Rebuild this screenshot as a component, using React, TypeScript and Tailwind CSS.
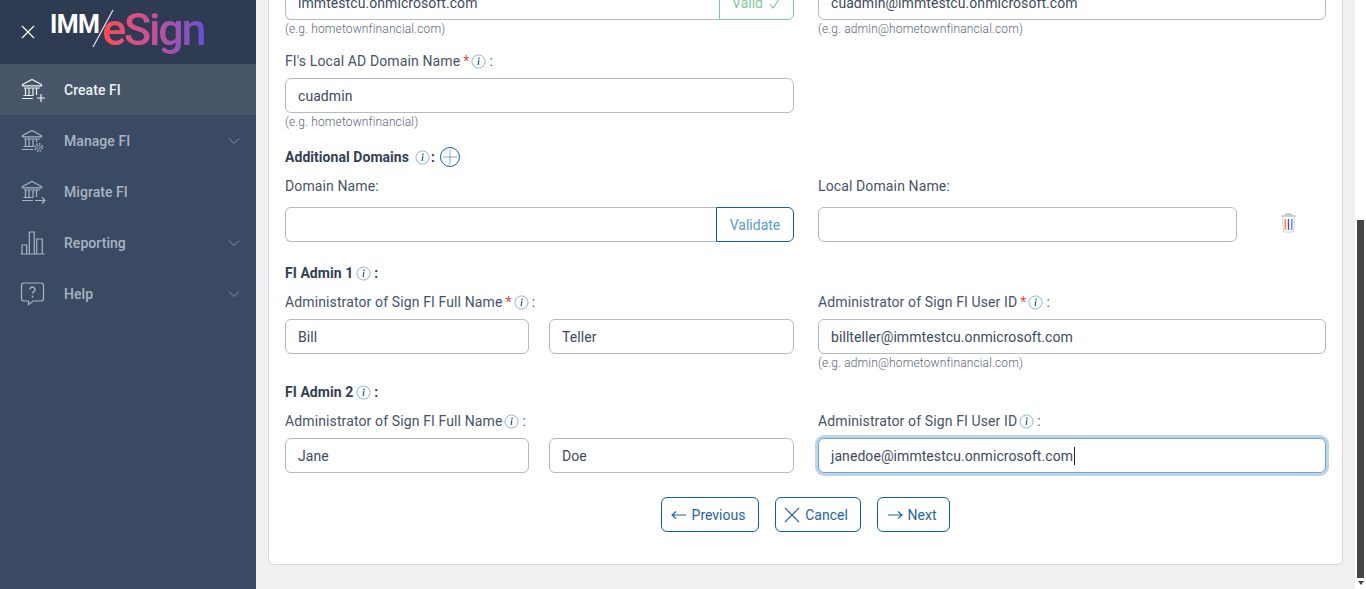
import React from "react";

const Info = ({ className = "" }: { className?: string }) => (
  <svg viewBox="0 0 16 16" className={"inline-block w-[15px] h-[15px] shrink-0 " + className} fill="none">
    <circle cx="8" cy="8" r="7" stroke="#7fa6c9" strokeWidth="0.9" />
    <path d="M8.300 6.900 7.700 11.300" stroke="#1f5f9a" strokeWidth="1.300" strokeLinecap="round" />
    <circle cx="8.600" cy="4.700" r="0.850" fill="#1f5f9a" />
  </svg>
);

const Chevron = () => (
  <svg viewBox="0 0 12 8" className="w-[12px] h-[8px]" fill="none" stroke="#8c98aa" strokeWidth="0.9">
    <path d="M1 1.500 6 6.500 11 1.500" />
  </svg>
);

const Bank = ({ children }: { children?: React.ReactNode }) => (
  <svg viewBox="0 0 26 26" className="w-[26px] h-[26px]" fill="none" stroke="currentColor" strokeWidth="1.200">
    <path d="M2.500 7.500 12 2.500l9.500 5v1.300h-19z" />
    <path d="M4 11h16M5.500 11v7M9 11v7M13 11v7M16.500 11v3M3.500 18.500h10M2 21.500h11" />
    {children}
  </svg>
);

const Field = ({ value, className = "", focused = false }: { value?: string; className?: string; focused?: boolean }) => (
  <div
    className={
      "h-[35px] px-[12px] pt-px flex items-center rounded-[6px] bg-white text-[14px] text-[#3d4a5c] tracking-[0.07px] border " +
      (focused ? "border-[#6ea3d4] ring-[3px] ring-[#bdd5ea] " : "border-[#b4bac6] ") +
      className
    }
  >
    <span className="whitespace-nowrap">{value}</span>
    {focused && <span className="w-px h-[18px] bg-[#222] ml-px" />}
  </div>
);

const Hint = ({ children }: { children: React.ReactNode }) => (
  <div className="h-[18px] leading-[18px] text-[12px] font-light tracking-[0.14px] text-[#5a6678]">{children}</div>
);

const Label = ({ children, className = "" }: { children: React.ReactNode; className?: string }) => (
  <div className={"h-[20px] leading-[20px] text-[14px] tracking-[0.12px] text-[#46536a] flex items-center " + className}>{children}</div>
);

const Req = () => <span className="text-[#e5484d] ml-[3px] mr-[1px]">*</span>;

const Section = ({ children, className = "" }: { children: React.ReactNode; className?: string }) => (
  <div className={"h-[20px] text-[14px] font-bold tracking-[0.05px] text-[#333f52] flex items-center " + className}>{children}</div>
);

const Btn = ({ icon, label, className = "" }: { icon: React.ReactNode; label: string; className?: string }) => (
  <div className={"h-[35px] pr-[4px] flex items-center justify-center gap-[5px] rounded-[6px] border border-[#0f5f9f] text-[14px] text-[#1f639f] " + className}>
    {icon}
    <span className="pt-[2px]">{label}</span>
  </div>
);

const NavItem = ({ icon, label, chevron, active }: { icon: React.ReactNode; label: string; chevron?: boolean; active?: boolean }) => (
  <div className={"h-[51px] flex items-center pl-[20px] pr-[16px] " + (active ? "bg-[#475569] text-[#eef1f5]" : "text-[#a9b3c1]")}>
    <span className="w-[44px] flex items-center">{icon}</span>
    <span className="flex-1 pt-[2px] text-[14px] font-medium tracking-[0.05px]">{label}</span>
    {chevron && <Chevron />}
  </div>
);

export default function App() {
  return (
    <div className="w-[1366px] h-[589px] overflow-hidden flex bg-[#f0f0f0]" style={{ fontFamily: "Roboto, sans-serif" }}>
      <aside className="w-[256px] shrink-0 bg-[#3b4a63] flex flex-col">
        <div className="h-[64px] bg-[#2f3b52] flex items-center pl-[21px] relative">
          <svg viewBox="0 0 14 14" className="w-[14px] h-[14px]" stroke="#fff" strokeWidth="1.200" fill="none">
            <path d="M1 1l12 12M13 1 1 13" />
          </svg>
          <div className="ml-[15px] h-[64px] flex items-start relative">
            <span className="mt-[9px] text-[25px] leading-[32px] font-bold text-white tracking-[-0.6px]">IMM</span>
            <svg viewBox="0 0 24 40" className="absolute left-[41px] top-[9px] w-[24px] h-[40px]" stroke="#e5e7eb" strokeWidth="1.200" fill="none">
              <path d="M22 1 2 38" />
            </svg>
            <span className="ml-[3px] mt-[4px] text-[45px] leading-[52px] font-medium tracking-[-2.300px] bg-gradient-to-r from-[#ff4b4f] via-[#c4509a] to-[#6a4fd0] bg-clip-text text-transparent">
              eSign
            </span>
          </div>
        </div>
        <NavItem
          active
          label="Create FI"
          icon={
            <Bank>
              <path d="M16.500 14v4M21 17v8M17 21h8" stroke="#eef1f5" />
            </Bank>
          }
        />
        <NavItem
          chevron
          label="Manage FI"
          icon={
            <Bank>
              <circle cx="18.500" cy="19.500" r="1.700" strokeWidth="1" />
              <circle cx="18.500" cy="19.500" r="3.700" strokeWidth="1.500" strokeDasharray="1.600 1.300" />
            </Bank>
          }
        />
        <NavItem
          label="Migrate FI"
          icon={
            <Bank>
              <path d="M16.500 14v4M15 21.500h10M22 18.500l3 3-3 3" />
            </Bank>
          }
        />
        <NavItem
          chevron
          label="Reporting"
          icon={
            <svg viewBox="0 0 26 26" className="w-[26px] h-[26px]" fill="none" stroke="currentColor" strokeWidth="1.200">
              <path d="M0.500 24h24M2 24V15h4.700v9M9.300 24V2h5v22M16.700 24V9h5.600v15" />
            </svg>
          }
        />
        <NavItem
          chevron
          label="Help"
          icon={
            <svg viewBox="0 0 26 26" className="w-[26px] h-[26px]" fill="none" stroke="currentColor" strokeWidth="1.200">
              <path d="M4 2h17a2.500 2.500 0 0 1 2.500 2.500v13a2.500 2.500 0 0 1-2.500 2.500H13l-4.500 3.500V20H4a2.500 2.500 0 0 1-2.500-2.500v-13A2.500 2.500 0 0 1 4 2z" />
              <path d="M10 8.500a2.500 2.500 0 1 1 3.800 2.100c-.9.6-1.300 1.100-1.300 2" strokeWidth="1.400" />
              <circle cx="12.500" cy="15.500" r="0.900" fill="currentColor" stroke="none" />
            </svg>
          }
        />
      </aside>

      <main className="flex-1 overflow-hidden pl-[12px] pr-[12px]">
        <div className="-mt-[39px] w-[1075px] h-[604px] bg-white border border-[#d4d6dc] rounded-[6px] pl-[16px] pr-[16px] pt-[23px] text-[#46536a]">
          <div className="grid grid-cols-[509px_508px] gap-x-[24px]">
            <div>
              <div className="flex">
                <Field value="immtestcu.onmicrosoft.com" className="flex-1 rounded-r-none border-r-0" />
                <div className="w-[75px] h-[35px] pt-px border border-[#7fcb97] rounded-r-[6px] flex items-center justify-center gap-[5px] text-[14px] text-[#7fcb97]">
                  Valid
                  <svg viewBox="0 0 14 14" className="w-[13px] h-[13px]" fill="none" stroke="#7fcb97" strokeWidth="1.200">
                    <path d="M2 8l3.500 4L12.500 1.500" />
                  </svg>
                </div>
              </div>
              <Hint>(e.g. hometownfinancial.com)</Hint>
            </div>
            <div>
              <Field value="cuadmin@immtestcu.onmicrosoft.com" />
              <Hint>(e.g. admin@hometownfinancial.com)</Hint>
            </div>
          </div>

          <Label className="mt-[13px]">
            FI's Local AD Domain Name
            <Req />
            <Info className="ml-[1px]" />
            <span className="ml-[3px]">:</span>
          </Label>
          <div className="w-[509px] mt-[7px]">
            <Field value="cuadmin" />
            <Hint>(e.g. hometownfinancial)</Hint>
          </div>

          <Section className="mt-[16px]">
            Additional Domains
            <Info className="ml-[6px]" />
            <span className="ml-[1px]">:</span>
            <svg viewBox="0 0 20 20" className="w-[20px] h-[20px] ml-[5px]" fill="none">
              <circle cx="10" cy="10" r="9.500" stroke="#0f5f9f" strokeWidth="1" />
              <path d="M10 3v14M3 10h14" stroke="#6a93b8" strokeWidth="0.8" />
            </svg>
          </Section>

          <div className="grid grid-cols-[509px_508px] gap-x-[24px] mt-[9px]">
            <Label>Domain Name:</Label>
            <Label>Local Domain Name:</Label>
          </div>
          <div className="grid grid-cols-[509px_508px] gap-x-[24px] mt-[11px]">
            <div className="flex">
              <Field className="flex-1 rounded-r-none border-r-0" />
              <div className="w-[78px] h-[35px] pt-px border border-[#0f5f9f] rounded-r-[6px] flex items-center justify-center text-[14px] text-[#5b9bd0]">
                Validate
              </div>
            </div>
            <div className="flex items-center">
              <Field className="w-[419px]" />
              <svg viewBox="0 0 16 20" className="w-[17px] h-[20px] ml-[43px] -mt-[3px]" fill="none">
                <path d="M5.500 2.500V1h5v1.500M1 3h14" stroke="#9aa0aa" strokeWidth="1" />
                <path d="M2 3.500 3 19h10l1-15.500" stroke="#c5d4e6" strokeWidth="1" />
                <path d="M4.500 6l.5 11" stroke="#e8903a" strokeWidth="1.400" />
                <path d="M8 6v11" stroke="#a0309a" strokeWidth="1.400" />
                <path d="M11.500 6l-.5 11" stroke="#2f9ad8" strokeWidth="1.400" />
              </svg>
            </div>
          </div>

          <Section className="mt-[21px]">
            FI Admin 1
            <Info className="ml-[3px]" />
            <span className="ml-[3px]">:</span>
          </Section>
          <div className="grid grid-cols-[509px_508px] gap-x-[24px] mt-[9px]">
            <Label>
              Administrator of Sign FI Full Name
              <Req />
              <Info className="ml-[1px]" />
              <span className="ml-[3px]">:</span>
            </Label>
            <Label>
              Administrator of Sign FI User ID
              <Req />
              <Info className="ml-[1px]" />
              <span className="ml-[3px]">:</span>
            </Label>
          </div>
          <div className="grid grid-cols-[509px_508px] gap-x-[24px] mt-[7px]">
            <div className="grid grid-cols-[244px_245px] gap-x-[20px]">
              <Field value="Bill" />
              <Field value="Teller" />
            </div>
            <div>
              <Field value="billteller@immtestcu.onmicrosoft.com" />
              <Hint>(e.g. admin@hometownfinancial.com)</Hint>
            </div>
          </div>

          <Section className="mt-[10px]">
            FI Admin 2
            <Info className="ml-[3px]" />
            <span className="ml-[3px]">:</span>
          </Section>
          <div className="grid grid-cols-[509px_508px] gap-x-[24px] mt-[9px]">
            <Label>
              Administrator of Sign FI Full Name
              <Info className="ml-[2px]" />
              <span className="ml-[3px]">:</span>
            </Label>
            <Label>
              Administrator of Sign FI User ID
              <Info className="ml-[2px]" />
              <span className="ml-[3px]">:</span>
            </Label>
          </div>
          <div className="grid grid-cols-[509px_508px] gap-x-[24px] mt-[7px]">
            <div className="grid grid-cols-[244px_245px] gap-x-[20px]">
              <Field value="Jane" />
              <Field value="Doe" />
            </div>
            <Field value="janedoe@immtestcu.onmicrosoft.com" focused />
          </div>

          <div className="flex justify-center gap-[16px] mt-[24px]">
            <Btn
              className="w-[98px]"
              label="Previous"
              icon={
                <svg viewBox="0 0 16 10" className="w-[16px] h-[10px]" fill="none" stroke="#1f639f" strokeWidth="1.100">
                  <path d="M15 5H1M5 1.500 1 5l4 3.500" />
                </svg>
              }
            />
            <Btn
              className="w-[86px]"
              label="Cancel"
              icon={
                <svg viewBox="0 0 16 16" className="w-[16px] h-[16px]" fill="none" stroke="#1f639f" strokeWidth="1.100">
                  <path d="M1 1l14 14M15 1 1 15" />
                </svg>
              }
            />
            <Btn
              className="w-[73px]"
              label="Next"
              icon={
                <svg viewBox="0 0 16 10" className="w-[16px] h-[10px]" fill="none" stroke="#1f639f" strokeWidth="1.100">
                  <path d="M1 5h14M11 1.500 15 5l-4 3.500" />
                </svg>
              }
            />
          </div>
        </div>
      </main>

      <div className="w-[11px] shrink-0 bg-white flex flex-col items-center pt-[220px] pb-[4px]">
        <div className="w-[7px] flex-1 bg-[#454545]" />
        <svg viewBox="0 0 6 4" className="w-[6px] h-[4px] mt-[3px]" fill="#454545">
          <path d="M0 0h6L3 4z" />
        </svg>
      </div>
    </div>
  );
}
